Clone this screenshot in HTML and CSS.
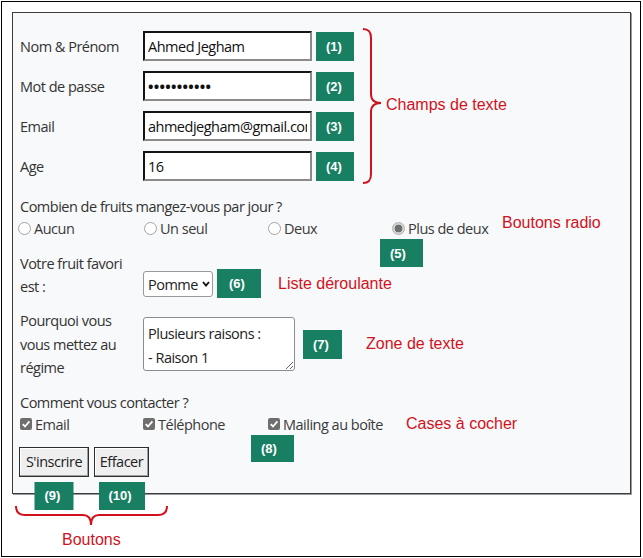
FILE: index.html
```html
<!DOCTYPE html>
<html lang="fr">
<head>
<meta charset="utf-8">
<title>Formulaire</title>
<link rel="stylesheet" href="styles.css">
</head>
<body>
<div class="frame">
  <form class="card">
    <div class="text-block">
      <div class="fields">
        <div class="row">
          <label class="lbl">Nom &amp; Prénom</label>
          <input class="txt" type="text" value="Ahmed Jegham">
          <span class="badge b38">(1)</span>
        </div>
        <div class="row">
          <label class="lbl">Mot de passe</label>
          <input class="txt pwd" type="password" value="ahmedjegham">
          <span class="badge b38">(2)</span>
        </div>
        <div class="row">
          <label class="lbl">Email</label>
          <input class="txt" type="text" value="ahmedjegham@gmail.com">
          <span class="badge b38">(3)</span>
        </div>
        <div class="row">
          <label class="lbl">Age</label>
          <input class="txt" type="text" value="16">
          <span class="badge b38">(4)</span>
        </div>
      </div>
      <div class="brace-group">
        <svg class="brace-v" width="22" height="156" viewBox="0 0 22 156"><path d="M1,1 C7,1 9,4 9,10 L9,66 C9,72 13,75 19,75 C13,75 9,78 9,84 L9,146 C9,152 7,155 1,155"/></svg>
        <span class="note">Champs de texte</span>
      </div>
    </div>

    <div class="q">Combien de fruits mangez-vous par jour ?</div>
    <div class="opts radios">
      <label class="opt"><span class="radio"></span>Aucun</label>
      <label class="opt"><span class="radio"></span>Un seul</label>
      <label class="opt"><span class="radio"></span>Deux</label>
      <label class="opt anchor"><span class="radio on"></span>Plus de deux<span class="badge b43 badge-under b5">(5)</span></label>
      <span class="note note-up">Boutons radio</span>
    </div>

    <div class="row-select">
      <label class="lbl two">Votre fruit favori<br>est :</label>
      <div class="select">
        <select><option>Pomme</option></select>
        <svg class="chev" width="8" height="6" viewBox="0 0 8 6"><path d="M1,1 L4,4.5 L7,1"/></svg>
      </div>
      <span class="badge b44">(6)</span>
      <span class="note note-sel">Liste déroulante</span>
    </div>

    <div class="row-area">
      <label class="lbl three">Pourquoi vous<br>vous mettez au<br>régime</label>
      <textarea class="area">Plusieurs raisons :
- Raison 1</textarea>
      <span class="badge b39 badge-area">(7)</span>
      <span class="note note-area">Zone de texte</span>
    </div>

    <div class="q">Comment vous contacter ?</div>
    <div class="opts checks">
      <label class="opt"><svg class="cb" width="12" height="12" viewBox="0 0 12 12"><rect x="0" y="0" width="12" height="12" rx="2"/><path d="M2.7,6.2 L5,8.5 L9.4,3.3"/></svg>Email</label>
      <label class="opt"><svg class="cb" width="12" height="12" viewBox="0 0 12 12"><rect x="0" y="0" width="12" height="12" rx="2"/><path d="M2.7,6.2 L5,8.5 L9.4,3.3"/></svg>Téléphone</label>
      <label class="opt anchor"><svg class="cb" width="12" height="12" viewBox="0 0 12 12"><rect x="0" y="0" width="12" height="12" rx="2"/><path d="M2.7,6.2 L5,8.5 L9.4,3.3"/></svg>Mailing au boîte<span class="badge b43 badge-under b8">(8)</span></label>
      <span class="note">Cases à cocher</span>
    </div>

    <div class="buttons">
      <span class="btn-wrap"><button type="button" class="btn w70">S'inscrire</button><span class="badge b39 badge-btn">(9)</span></span>
      <span class="btn-wrap"><button type="button" class="btn w55">Effacer</button><span class="badge b46 badge-btn">(10)</span></span>
    </div>
  </form>

  <svg class="brace-h" width="154" height="24" viewBox="0 0 154 24"><path d="M1,1 C1,7 4,10 10,10 L68,10 C73,10 76,13 76,20 C76,13 79,10 84,10 L143,10 C149,10 152,7 152,1"/></svg>
  <div class="note note-btn">Boutons</div>
</div>
</body>
</html>
```

FILE: styles.css
```css
* { box-sizing: border-box; }

html, body {
  margin: 0;
  padding: 0;
  background: #ffffff;
}

body {
  padding: 1px 0 0 1px;
  font-family: "Open Sans", "Noto Sans", sans-serif;
  font-size: 14.5px;
  color: #333333;
}

.frame {
  width: 640px;
  height: 556px;
  border: 1px solid #000000;
  background: #ffffff;
}

.card {
  margin: 10px 0 0 10px;
  width: 619px;
  background: #f8f9fa;
  border: 1px solid #3c3c3c;
  box-shadow: 1px 1px 0 #9a9a9a;
  padding: 18px 0 16px 7px;
  letter-spacing: -0.5px;
}

/* text fields */
.text-block {
  display: flex;
  align-items: flex-start;
}

.fields {
  display: flex;
  flex-direction: column;
  gap: 10px;
}

.row {
  display: flex;
  align-items: center;
  height: 30px;
}

.lbl {
  width: 123px;
  flex: none;
  line-height: 23px;
}

.txt {
  width: 169px;
  height: 30px;
  margin: 0;
  padding: 0 3px;
  border-style: solid;
  border-width: 2px;
  border-color: #141414 #8a8a8a #8a8a8a #141414;
  background: #ffffff;
  font-family: "Open Sans", "Noto Sans", sans-serif;
  font-size: 14.5px;
  letter-spacing: -0.5px;
  color: #111111;
  outline: none;
}

.pwd {
  font-weight: bold;
  letter-spacing: 0.3px;
}

.badge {
  display: inline-flex;
  align-items: center;
  flex: none;
  height: 29px;
  padding-left: 10px;
  background: #187f63;
  color: #ffffff;
  font-family: "Liberation Sans", Arial, sans-serif;
  font-weight: bold;
  font-size: 13px;
  letter-spacing: 0;
}

.b38 { width: 38px; margin-left: 4px; padding-left: 10px; }
.b39 { width: 39px; }
.b43 { width: 43px; }
.b44 { width: 44px; padding-left: 12px; }
.b46 { width: 46px; }

.brace-group {
  display: flex;
  align-items: center;
  margin: -3px 0 0 8px;
}

.brace-group .note { margin-top: -3px; }

.brace-v path, .brace-h path {
  fill: none;
  stroke: #d1121c;
  stroke-width: 2;
}

.note {
  font-family: "Liberation Sans", Arial, sans-serif;
  font-size: 16px;
  letter-spacing: 0;
  color: #d1121c;
  line-height: 20px;
}

.brace-group .note { margin-left: 2px; }

/* questions */
.q {
  margin-top: 11px;
  line-height: 23px;
}

.opts {
  display: grid;
  align-items: center;
  height: 23px;
  line-height: 23px;
}

.radios {
  grid-template-columns: 126px 124px 124px 110px auto;
  margin-left: -2px;
  margin-top: -1px;
}

.checks {
  grid-template-columns: 123px 125px 138px auto;
  margin-top: -1px;
}

.opt {
  display: flex;
  align-items: center;
  white-space: nowrap;
  color: #3a3a3a;
}

.anchor { position: relative; }

.radio {
  width: 13px;
  height: 13px;
  margin-right: 3px;
  border-radius: 50%;
  border: 1px solid #a4a4a4;
  background: #ffffff;
  flex: none;
}

.radio.on {
  border-color: #b0b0b0;
  background: radial-gradient(circle, #6f6f6f 0 3.6px, #d6d6d6 4.2px);
}

.cb {
  flex: none;
  margin-right: 3px;
}

.cb rect { fill: #6e6e6e; }
.cb path { fill: none; stroke: #ffffff; stroke-width: 1.8; }

.badge-under {
  position: absolute;
  top: 22px;
}

.b5 { left: -12px; height: 28px; }
.b8 { left: -17px; height: 27px; }

.note-up { margin-top: -12px; }

/* select */
.row-select {
  display: flex;
  align-items: flex-end;
  margin-top: 12px;
}

.select {
  position: relative;
  width: 70px;
  height: 26px;
  margin-bottom: 1px;
}

.select select {
  appearance: none;
  -webkit-appearance: none;
  width: 70px;
  height: 26px;
  margin: 0;
  padding: 0 0 0 4px;
  border: 1px solid #9a9a9a;
  border-radius: 3px;
  background: #ffffff;
  font-family: "Open Sans", "Noto Sans", sans-serif;
  font-size: 14.5px;
  letter-spacing: -0.5px;
  color: #222222;
}

.chev {
  position: absolute;
  right: 3px;
  top: 10px;
}

.chev path {
  fill: none;
  stroke: #111111;
  stroke-width: 1.9;
}

.row-select .badge { margin-left: 4px; }

.note-sel {
  margin-left: 17px;
  margin-bottom: 4px;
}

/* textarea */
.row-area {
  display: flex;
  align-items: center;
  margin-top: 11px;
}

.three { line-height: 23.5px; }

.area {
  width: 152px;
  height: 54px;
  margin: 0;
  padding: 4px 4px 0;
  border: 1px solid #8c8c8c;
  border-radius: 3px;
  background: #ffffff;
  font-family: "Open Sans", "Noto Sans", sans-serif;
  font-size: 14.5px;
  letter-spacing: -0.5px;
  line-height: 24px;
  color: #222222;
  overflow: hidden;
}

.badge-area { margin-left: 8px; }

.note-area { margin-left: 24px; }

/* buttons */
.buttons {
  display: flex;
  gap: 5px;
  margin-top: 11px;
  margin-left: -1px;
}

.btn-wrap {
  position: relative;
  display: inline-block;
}

.btn {
  height: 30px;
  margin: 0;
  padding: 0;
  background: #efefef;
  border: 1px solid #2e2e2e;
  box-shadow: inset -1px -1px 0 #a0a0a0, inset 1px 1px 0 #ffffff;
  font-family: "Open Sans", "Noto Sans", sans-serif;
  font-size: 14.5px;
  letter-spacing: -0.5px;
  color: #222222;
}

.w70 { width: 70px; }
.w55 { width: 55px; }

.badge-btn {
  position: absolute;
  top: 35px;
  left: 50%;
  transform: translateX(-50%);
  height: 28px;
}

.brace-h {
  display: block;
  margin: 11px 0 0 13px;
}

.note-btn {
  margin: 1px 0 0 60px;
}
```
